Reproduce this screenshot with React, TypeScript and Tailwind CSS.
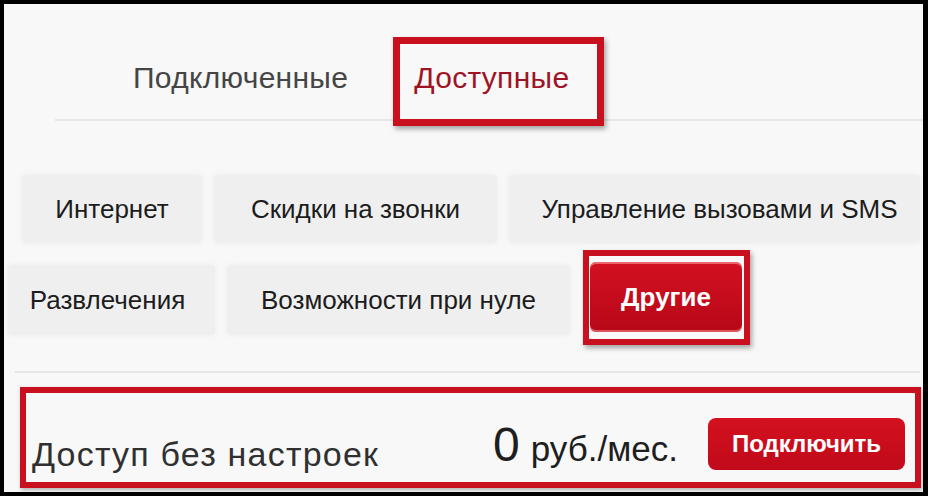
export default function App() {
  const font = { fontFamily: '"Liberation Sans", Arial, sans-serif' }

  return (
    <div className="h-[496px] w-[928px] bg-black pt-1 pl-1 pr-[5px] pb-1" style={font}>
      <div className="flex h-full flex-col bg-[#f8f8f8] overflow-hidden">
        {/* tabs */}
        <div className="ml-[51px] flex h-[117px] shrink-0 items-end border-b-2 border-[#e6e6e6] pl-[78px]">
          <div className="mb-[26px] text-[30px] leading-none tracking-[0.3px] text-[#454545]">
            Подключенные
          </div>
          <div className="relative mb-[26px] ml-[66px] text-[30px] leading-none tracking-[0.3px] text-[#9e1424]">
            Доступные
            <div className="pointer-events-none absolute -left-[21px] -right-[35px] -top-[26px] -bottom-[33px] border-[7px] border-[#c8101e] shadow-[2px_3px_5px_rgba(0,0,0,0.35)]" />
          </div>
        </div>

        {/* categories */}
        <div className="mt-[54px] flex flex-col gap-[22px]">
          <div className="ml-[18px] flex gap-3">
            <Pill w="w-[180px]">Интернет</Pill>
            <Pill w="w-[283px]">Скидки на звонки</Pill>
            <Pill w="w-[411px]" extra="pl-[10px]">Управление вызовами и SMS</Pill>
          </div>
          <div className="ml-[4px] flex items-center gap-3">
            <Pill w="w-[207px]" h="h-[70px]" extra="pr-[8px]">Развлечения</Pill>
            <Pill w="w-[343px]" h="h-[70px]">Возможности при нуле</Pill>
            <div className="relative ml-2 -mt-[6px]">
              <button className="flex h-[70px] w-[152px] items-center justify-center rounded-md bg-gradient-to-b from-[#d31021] to-[#b70818] text-[26px] font-bold text-white shadow-[inset_0_2px_0_rgba(255,160,160,0.6),inset_0_-2px_0_rgba(255,160,160,0.5)]">
                Другие
              </button>
              <div className="pointer-events-none absolute -left-[7px] -right-[8px] -top-[12px] -bottom-[13px] border-[6px] border-[#c8101e] shadow-[2px_3px_5px_rgba(0,0,0,0.35)]" />
            </div>
          </div>
        </div>

        <div className="ml-[11px] mr-[3px] mt-[36px] h-[2px] bg-[#e6e6e6]" />

        {/* option row */}
        <div className="ml-4 mr-[2px] mt-[14px] flex h-[101px] items-end border-[6px] border-[#c8101e] pb-3 pl-[6px] pr-[10px] shadow-[1px_2px_4px_rgba(0,0,0,0.3)]">
          <div className="-mb-[1px] text-[34px] leading-none tracking-[1.2px] text-[#303030]">
            Доступ без настроек
          </div>
          <div className="mb-[1px] ml-auto flex items-baseline gap-[11px] text-[#1e1e1e]">
            <span className="text-[48px] leading-none">0</span>
            <span className="text-[35px] leading-none">руб./мес.</span>
          </div>
          <button className="ml-[30px] flex h-[52px] w-[197px] items-center justify-center rounded-lg bg-gradient-to-b from-[#d4101f] to-[#c00a1a] text-[24px] font-bold text-white">
            Подключить
          </button>
        </div>
      </div>
    </div>
  )
}

function Pill({
  w,
  h = 'h-[68px]',
  extra = '',
  children,
}: {
  w: string
  h?: string
  extra?: string
  children: string
}) {
  return (
    <div
      className={`${w} ${h} ${extra} flex items-center justify-center rounded-sm bg-[#efefef] text-[26px] text-[#1c1c1c] shadow-[0_0_6px_rgba(0,0,0,0.05)]`}
    >
      {children}
    </div>
  )
}
